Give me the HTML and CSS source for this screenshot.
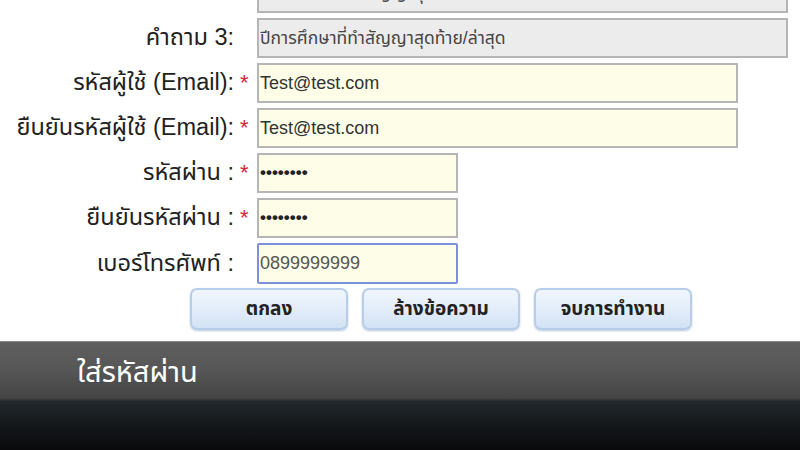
FILE: index.html
```html
<!DOCTYPE html>
<html lang="th">
<head>
<meta charset="utf-8">
<title>ลงทะเบียน</title>
<link rel="stylesheet" href="styles.css">
</head>
<body>
<div class="stage">
  <div class="form">
    <div class="label">คำถาม 2:</div><div class="star"></div><div class="field q">ปีการศึกษาที่ทำสัญญาสุดท้าย</div>
    <div class="label">คำถาม 3:</div><div class="star"></div><div class="field q">ปีการศึกษาที่ทำสัญญาสุดท้าย/ล่าสุด</div>
    <div class="label">รหัสผู้ใช้ (Email):</div><div class="star">*</div><div class="field email">Test@test.com</div>
    <div class="label">ยืนยันรหัสผู้ใช้ (Email):</div><div class="star">*</div><div class="field email">Test@test.com</div>
    <div class="label">รหัสผ่าน :</div><div class="star">*</div><div class="field pw dots">••••••••</div>
    <div class="label">ยืนยันรหัสผ่าน :</div><div class="star">*</div><div class="field pw dots">••••••••</div>
    <div class="label">เบอร์โทรศัพท์ :</div><div class="star"></div><div class="field pw focus">0899999999</div>
  </div>
  <div class="buttons">
    <button class="btn">ตกลง</button>
    <button class="btn">ล้างข้อความ</button>
    <button class="btn">จบการทำงาน</button>
  </div>
</div>
<div class="caption">
  <div class="caption-text">ใส่รหัสผ่าน</div>
</div>
</body>
</html>
```
FILE: styles.css
```css
html, body {
  margin: 0;
  padding: 0;
  width: 800px;
  height: 450px;
  overflow: hidden;
  background: #ffffff;
  font-family: "Liberation Sans", "Noto Sans Thai", Tahoma, sans-serif;
}

.stage {
  height: 341px;
  box-sizing: border-box;
  overflow: hidden;
  display: flex;
  flex-direction: column;
  justify-content: flex-end;
  padding-bottom: 11px;
  background: #ffffff;
}

.form {
  display: grid;
  grid-template-columns: 236px 21px auto;
  row-gap: 5px;
  align-items: center;
}

.label {
  text-align: right;
  font-size: 23.5px;
  color: #222222;
  white-space: nowrap;
  padding-right: 2px;
}

.star {
  color: #d8243a;
  font-size: 22px;
  padding-left: 4px;
  align-self: center;
  line-height: 1;
}

.field {
  height: 40px;
  box-sizing: border-box;
  border: 2px solid #b5b5b5;
  background: #fdfde8;
  display: flex;
  align-items: center;
  padding-left: 1px;
  font-size: 18px;
  color: #333333;
  white-space: nowrap;
  overflow: hidden;
}

.field.q {
  width: 531px;
  background: #ececec;
  font-size: 17.5px;
  color: #444444;
}

.field.email { width: 481px; }

.field.pw { width: 201px; }

.field.dots {
  font-weight: bold;
  font-size: 17px;
  color: #222222;
}

.field.focus {
  border-color: #7b8fdb;
  border-radius: 2px;
  height: 41px;
  color: #555555;
}

.buttons {
  display: flex;
  gap: 14px;
  padding-left: 190px;
  margin-top: 4px;
}

.btn {
  width: 158px;
  height: 42px;
  border: 2px solid #b7cde9;
  border-radius: 7px;
  background: linear-gradient(#f1f6fc 0%, #e3edf9 50%, #d2e2f5 100%);
  box-shadow: 0 1px 2px rgba(120, 150, 190, 0.5);
  font-family: "Liberation Sans", "Noto Sans Thai", Tahoma, sans-serif;
  font-size: 19px;
  font-weight: bold;
  color: #222222;
  padding: 0;
}

.caption {
  height: 109px;
  border-top: 1px solid #8a8a8a;
  box-sizing: border-box;
  background: linear-gradient(#5f5f5f 0%, #575757 25%, #4c4c4c 40%, #454545 52%, #22282c 55%, #15191c 75%, #0a0a0c 100%);
  padding-left: 77px;
  padding-top: 13px;
}

.caption-text {
  color: #ffffff;
  font-size: 29px;
  line-height: 36px;
  font-family: "Noto Sans Thai", "Liberation Sans", sans-serif;
}
```
